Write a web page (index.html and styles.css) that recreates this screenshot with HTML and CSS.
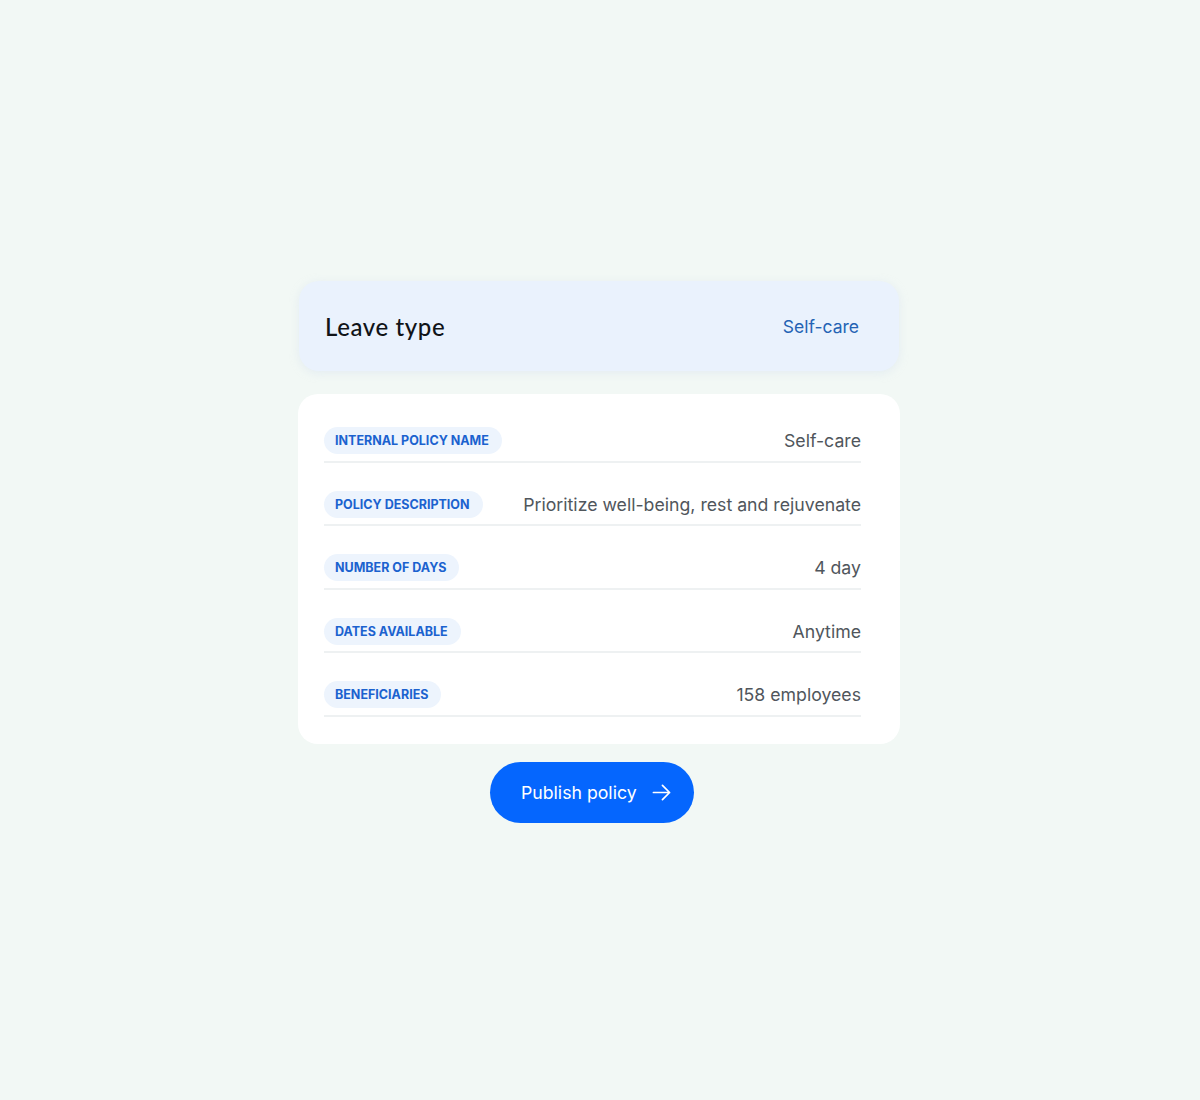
FILE: index.html
```html
<!DOCTYPE html>
<html>
<head>
<meta charset="utf-8">
<link rel="stylesheet" href="styles.css">
</head>
<body>
<main class="wrap">
  <section class="head">
    <h1 class="head-title">Leave type</h1>
    <span class="head-value">Self-care</span>
  </section>
  <section class="card">
    <div class="row"><span class="pill">INTERNAL POLICY NAME</span><span class="val">Self-care</span></div>
    <div class="row"><span class="pill">POLICY DESCRIPTION</span><span class="val">Prioritize well-being, rest and rejuvenate</span></div>
    <div class="row"><span class="pill">NUMBER OF DAYS</span><span class="val">4 day</span></div>
    <div class="row"><span class="pill">DATES AVAILABLE</span><span class="val">Anytime</span></div>
    <div class="row"><span class="pill">BENEFICIARIES</span><span class="val">158 employees</span></div>
  </section>
  <button class="btn">Publish policy
    <svg class="arrow" width="19" height="19" viewBox="0 0 20 20" fill="none" stroke="#fff" stroke-width="1.8" stroke-linecap="round" stroke-linejoin="round"><path d="M1.5 10h17M11 2.5l7.5 7.5-7.5 7.5"/></svg>
  </button>
</main>
</body>
</html>
```
FILE: styles.css
```css
html, body { margin: 0; padding: 0; }
body {
  background: #f2f8f5;
  width: 1200px;
  height: 1100px;
  font-family: Inter, "Noto Sans", sans-serif;
}
.wrap {
  width: 602px;
  margin: 0 auto;
  padding-top: 281px;
  display: flex;
  flex-direction: column;
  transform: translateX(-1px);
}
.head {
  margin: 0 1px;
  height: 90px;
  box-sizing: border-box;
  background: #eaf2fd;
  border-radius: 20px;
  box-shadow: 0 2px 10px rgba(200, 215, 235, 0.35);
  display: flex;
  align-items: center;
  justify-content: space-between;
  padding: 0 40px 0 26px;
}
.head-title {
  margin: 0;
  font-family: "Lato", "Inter", sans-serif;
  font-weight: 500;
  font-size: 24px;
  color: #111418;
  letter-spacing: 0.6px;
}
.head-value {
  font-size: 17.5px;
  color: #2463b4;
}
.card {
  margin-top: 23px;
  background: #fff;
  border-radius: 20px;
  padding: 5px 39px 27px 26px;
  display: flex;
  flex-direction: column;
}
.row {
  display: flex;
  align-items: center;
  justify-content: space-between;
  padding: 28px 0 6.5px;
  border-bottom: 2px solid #eef1f2;
}
.pill {
  height: 27px;
  display: inline-flex;
  align-items: center;
  padding: 0 13px 0 11px;
  border-radius: 14px;
  background: #edf4fd;
  color: #1b62cf;
  font-size: 12.5px;
  font-weight: 700;
}
.val {
  font-size: 17.7px;
  color: #50565c;
}
.btn {
  align-self: center;
  margin-top: 18px;
  margin-right: 14px;
  height: 61px;
  width: 204px;
  border: 0;
  border-radius: 31px;
  background: #0566fe;
  color: #fff;
  font-family: Inter, sans-serif;
  font-size: 17.7px;
  display: flex;
  align-items: center;
  justify-content: flex-start;
  padding: 0 0 0 31px;
  gap: 15px;
}
.arrow { display: block; }
```
